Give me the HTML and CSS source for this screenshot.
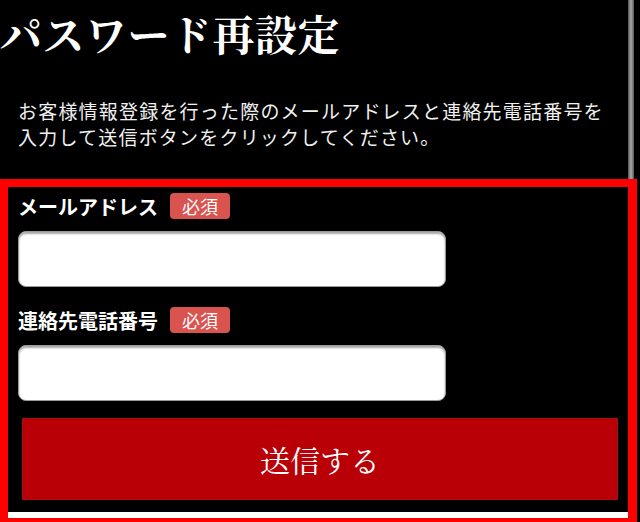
FILE: index.html
```html
<!DOCTYPE html>
<html lang="ja">
<head>
<meta charset="utf-8">
<title>パスワード再設定</title>
<link rel="stylesheet" href="styles.css">
</head>
<body>
<div class="scrollbar"></div>
<h1 class="title">パスワード再設定</h1>
<p class="lead">お客様情報登録を行った際のメールアドレスと連絡先電話番号を<br>入力して送信ボタンをクリックしてください。</p>
<div class="frame">
  <form class="form">
    <div class="label-row">
      <span class="label">メールアドレス</span>
      <span class="badge">必須</span>
    </div>
    <input class="field" type="email">
    <div class="label-row second">
      <span class="label">連絡先電話番号</span>
      <span class="badge">必須</span>
    </div>
    <input class="field" type="tel">
    <button class="submit" type="button">送信する</button>
  </form>
  <div class="strip"></div>
</div>
</body>
</html>
```
FILE: styles.css
```css
html, body {
  margin: 0;
  padding: 0;
  background: #000;
}
body {
  width: 640px;
  height: 522px;
  overflow: hidden;
  position: relative;
  color: #fff;
  font-family: "Noto Sans CJK JP", "Noto Sans", sans-serif;
}
.scrollbar {
  position: absolute;
  left: 628px;
  top: 0;
  width: 6px;
  height: 179px;
  background: linear-gradient(to right, #555, #aaa 50%, #555);
}
.title {
  margin: 0;
  padding: 8px 0 0 0;
  font-family: "Noto Serif CJK JP", "Noto Sans CJK JP", serif;
  font-size: 42px;
  line-height: 50px;
  font-weight: 700;
  letter-spacing: 0.5px;
  color: #fff;
}
.lead {
  margin: 40px 0 0 0;
  padding-left: 18px;
  font-size: 19px;
  line-height: 26px;
  letter-spacing: 1.2px;
  color: #f0f0f0;
  font-weight: 400;
}
.frame {
  margin-top: 29px;
  width: 620px;
  border: 8px solid #ff0000;
  border-right-width: 9px;
}
.form {
  display: flex;
  flex-direction: column;
  align-items: flex-start;
  padding: 6px 0 12px 10px;
  background: #000;
}
.label-row {
  display: flex;
  align-items: center;
  gap: 12px;
  height: 26px;
}
.label-row.second {
  margin-top: 20px;
}
.label {
  font-size: 20px;
  font-weight: 700;
  color: #fff;
}
.badge {
  background: #d9534f;
  color: #fff;
  font-size: 18px;
  line-height: 26px;
  height: 26px;
  padding: 0 12px;
  border-radius: 4px;
}
.field {
  margin: 12px 0 0 0;
  width: 428px;
  height: 56px;
  box-sizing: border-box;
  border: 1px solid #9a9a9a;
  border-radius: 8px;
  background: #fff;
  box-shadow: inset 0 2px 2px rgba(0, 0, 0, 0.35);
  outline: none;
}
.submit {
  margin: 17px 0 0 4px;
  width: 596px;
  height: 82px;
  border: 1px solid #a81010;
  background: #b90006;
  color: #fff;
  font-family: "Noto Serif CJK JP", "Noto Sans CJK JP", serif;
  font-size: 30px;
  font-weight: 400;
  padding: 0;
  cursor: pointer;
}
.strip {
  height: 6px;
  background: #fff;
}
```
